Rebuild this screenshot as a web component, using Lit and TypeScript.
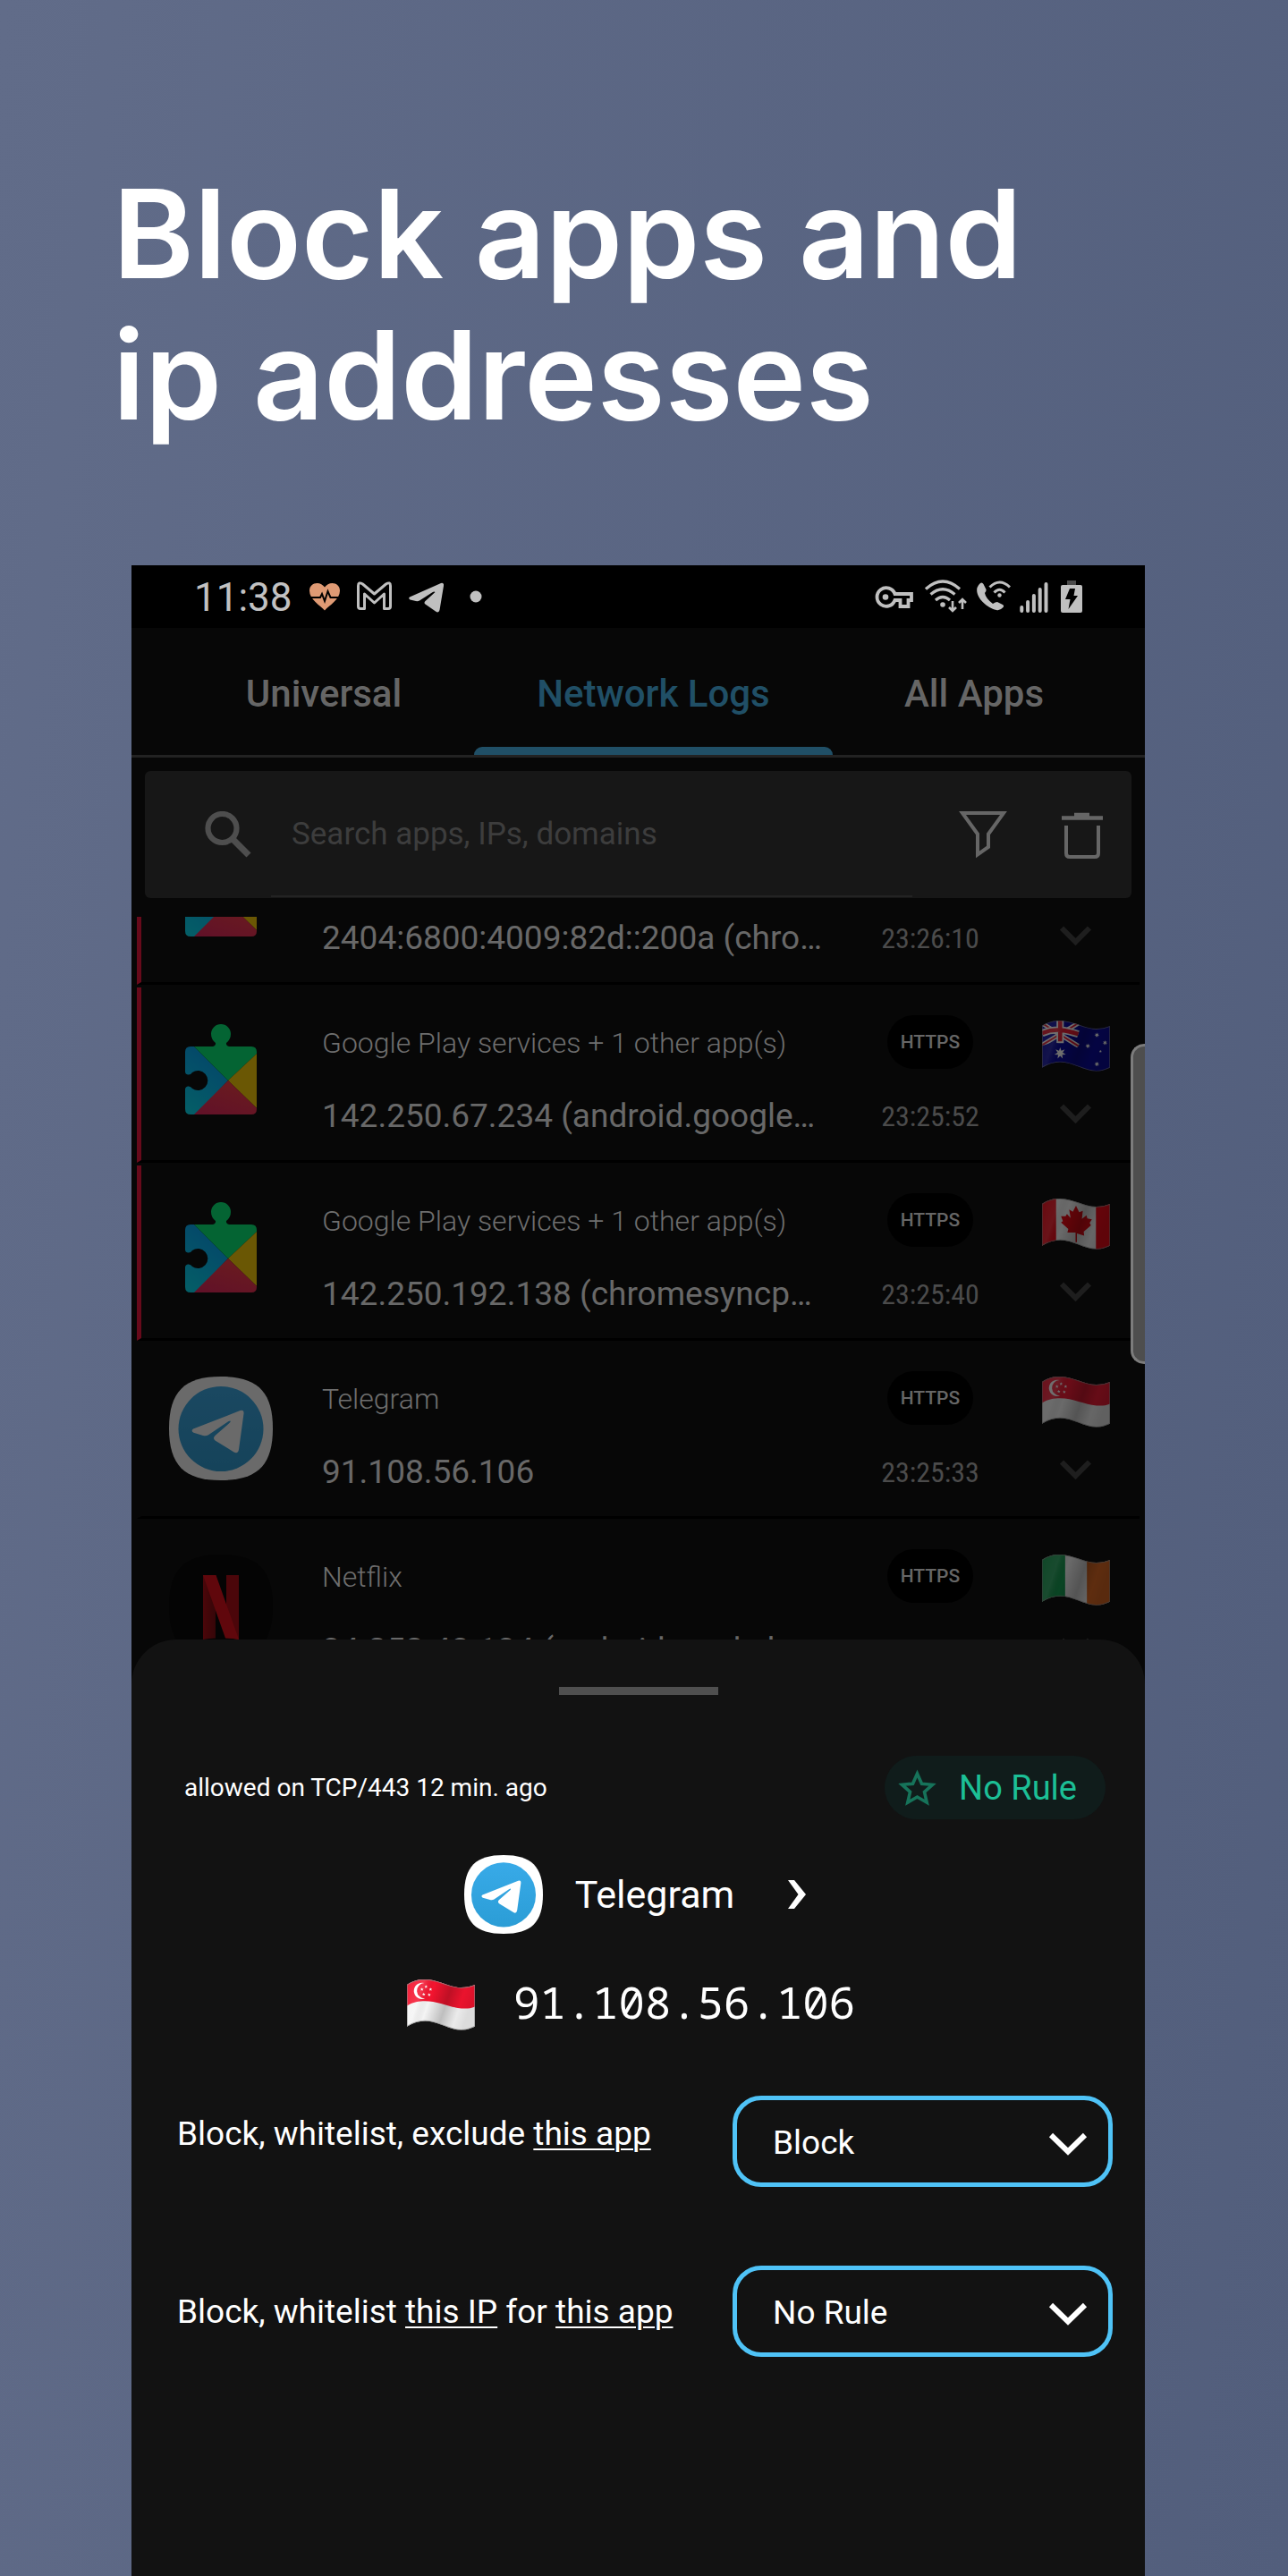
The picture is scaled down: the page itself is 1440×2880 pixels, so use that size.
import { LitElement, html, svg, css, nothing } from "lit";
import { customElement, property } from "lit/decorators.js";

type Country = "au" | "ca" | "sg" | "ie";
type AppKind = "play" | "telegram" | "netflix";

interface LogEntry {
  app?: string;
  kind: AppKind;
  address: string;
  time: string;
  country?: Country;
  blocked: boolean;
}

// The first entry is scrolled half out of view, so only its lower line is filled in.
const ENTRIES: LogEntry[] = [
  { kind: "play", address: "2404:6800:4009:82d::200a (chro…", time: "23:26:10", blocked: true },
  { app: "Google Play services + 1 other app(s)", kind: "play", address: "142.250.67.234 (android.google…", time: "23:25:52", country: "au", blocked: true },
  { app: "Google Play services + 1 other app(s)", kind: "play", address: "142.250.192.138 (chromesyncp…", time: "23:25:40", country: "ca", blocked: true },
  { app: "Telegram", kind: "telegram", address: "91.108.56.106", time: "23:25:33", country: "sg", blocked: false },
  { app: "Netflix", kind: "netflix", address: "34.252.43.134 (android.prod.cl…", time: "23:24:31", country: "ie", blocked: false },
];

const SQUIRCLE = "M58 0C99 0 116 17 116 58C116 99 99 116 58 116C17 116 0 99 0 58C0 17 17 0 58 0Z";
const PLANE =
  "M27 58.500L79.500 38Q84 36.500 83.500 41.500L78 81.500Q77 87 72.500 84.500L51.500 71.500Q48.500 69 51.500 66L68 51.500Q70 48.500 66.500 50L44 65.300Q41.500 66.800 38 66L27.500 62.800Q24 60.500 27 58.500Z";
const FLAG =
  "M0 6C7 1 13 0 20 0C34 0 47 9 60 9C66 9 70 8 75 6V52C70 54 66 56 60 56C47 56 34 46 20 46C13 46 7 48 0 52Z";

@customElement("app-icon")
export class AppIcon extends LitElement {
  @property() kind: AppKind = "telegram";

  static styles = css`
    :host { display: block; }
    svg { display: block; width: 100%; height: auto; }
  `;

  private telegram() {
    return svg`
      <defs><linearGradient id="sky" x1="0" y1="0" x2="0" y2="1">
        <stop offset="0" stop-color="#38aae8"/><stop offset="1" stop-color="#2b9dd6"/>
      </linearGradient></defs>
      <path d=${SQUIRCLE} fill="#fff"/>
      <circle cx="58" cy="58.500" r="47.500" fill="url(#sky)"/>
      <path d=${PLANE} fill="#fff"/>`;
  }

  private netflix() {
    return svg`
      <defs><linearGradient id="fold" x1="0" y1="0" x2="1" y2="0">
        <stop offset="0" stop-color="#b1060f"/><stop offset="1" stop-color="#7c050b"/>
      </linearGradient></defs>
      <path d=${SQUIRCLE} fill="#000"/>
      <path d="M38 23H52V93.500Q45 93.500 38 95Z" fill="url(#fold)"/>
      <path d="M64 23H78V95Q71 93.500 64 93.500Z" fill="#b1060f"/>
      <path d="M38 23H52.500L78 95Q71 93.500 63 93.500Z" fill="#e50914"/>`;
  }

  private play() {
    return svg`
      <defs>
        <clipPath id="piece"><path d="M24 29H49Q52.500 28 52 25Q47 21 47 15A11 11 0 0 1 69 15Q69 21 64 25Q63.500 28 67 29H92Q98 29 98 35V99Q98 105 92 105H24Q18 105 18 99V77Q18 74 21 73.500Q24 73 26 76A11 11 0 1 0 26 58Q24 61 21 60.500Q18 60 18 57V35Q18 29 24 29Z"/></clipPath>
        <linearGradient id="blue" x1="0" y1="1" x2="0.400" y2="0"><stop offset="0" stop-color="#00e3f5"/><stop offset="1" stop-color="#00a2ff"/></linearGradient>
        <linearGradient id="red" x1="0" y1="1" x2="0.600" y2="0"><stop offset="0" stop-color="#e6205c"/><stop offset="1" stop-color="#ff3a44"/></linearGradient>
      </defs>
      <g clip-path="url(#piece)">
        <path d="M18 20V105H30L66 67L28 29Z" fill="url(#blue)"/>
        <path d="M28 29L40 0H80L98 29V37L66 67Z" fill="#00f076"/>
        <path d="M98 37V98L66 67Z" fill="#ffd000"/>
        <path d="M28 105L66 67L98 98V105Z" fill="url(#red)"/>
      </g>`;
  }

  render() {
    const art = this.kind === "telegram" ? this.telegram() : this.kind === "netflix" ? this.netflix() : this.play();
    return html`<svg viewBox="0 0 116 116" aria-hidden="true">${art}</svg>`;
  }
}

@customElement("country-flag")
export class CountryFlag extends LitElement {
  @property() country: Country = "sg";

  static styles = css`
    :host { display: block; width: 76px; }
    svg { display: block; width: 100%; height: auto; }
  `;

  private star(x: number, y: number, r: number, points = 5) {
    const pts = Array.from({ length: points * 2 }, (_, i) => {
      const a = (Math.PI * i) / points - Math.PI / 2;
      const d = i % 2 ? r * 0.45 : r;
      return `${(x + d * Math.cos(a)).toFixed(2)},${(y + d * Math.sin(a)).toFixed(2)}`;
    }).join(" ");
    return svg`<polygon points=${pts} fill="#fff"/>`;
  }

  private art() {
    switch (this.country) {
      case "sg":
        return svg`
          <rect width="75" height="56" fill="#f4f4f4"/>
          <path d="M0 0H75V30C70 32 66 32.500 60 32C47 31 34 24 20 24C13 24 7 25 0 29Z" fill="#f4142f"/>
          <path d="M19 4A9 9 0 1 0 20 21A8.500 8.500 0 0 1 19 4Z" fill="#fff"/>
          ${this.star(21, 8, 1.9)}${this.star(26, 11, 1.9)}${this.star(24.500, 17, 1.9)}${this.star(18.500, 16.500, 1.9)}${this.star(16.500, 11, 1.9)}`;
      case "ca":
        return svg`
          <rect width="75" height="56" fill="#f4f4f4"/>
          <rect width="15.500" height="56" fill="#f00010"/><rect x="59.500" width="16" height="56" fill="#f00010"/>
          <path d="M37.500 8L41 15L45 13.500L44 22.500L49 18.500L50 22L55 23L52.500 27L54 29.500L46 36.500L46.500 41L38.500 38.500V48H37V37.500L28 37.500L29 33.500L21 26.500L23 25L21 19.500L26 19.500L27.500 17L31.500 21.500L30 12L34 14.500Z" fill="#e8000c"/>`;
      case "ie":
        return svg`
          <rect width="75" height="56" fill="#f4f4f4"/>
          <rect width="25.500" height="56" fill="#0f9a4c"/><rect x="49.500" width="26" height="56" fill="#e0661c"/>`;
      default:
        return svg`
          <rect width="75" height="56" fill="#00009c"/>
          <path d="M0 3L40 28M0 27L40 3" stroke="#fff" stroke-width="5"/>
          <path d="M0 3L40 28M0 27L40 3" stroke="#e8142c" stroke-width="1.800"/>
          <path d="M20 0V25M0 14C7 11 13 10 20 10.500S34 13 40 15" stroke="#fff" stroke-width="8" fill="none"/>
          <path d="M20 0V23M0 14C7 11 13 10 20 10.500S34 13 40 15" stroke="#e8142c" stroke-width="4.500" fill="none"/>
          <path d="M40.500 5V60H0V28L12 24L40.500 30Z" fill="#00009c"/>
          ${this.star(20, 36, 6.5, 7)}${this.star(60.500, 16, 2.8, 7)}${this.star(69.500, 24.500, 2.8, 7)}${this.star(50.500, 28, 2.8, 7)}${this.star(60.500, 48, 2.8, 7)}${this.star(64.500, 34, 1.6)}`;
    }
  }

  render() {
    return html`<svg viewBox="0 0 75 57" role="img" aria-label=${this.country}>
      <defs>
        <clipPath id="wave"><path d=${FLAG} /></clipPath>
        <linearGradient id="shade" x1="0" y1="0" x2="1" y2="0.250">
          <stop offset="0" stop-color="#fff" stop-opacity="0.050" />
          <stop offset="0.250" stop-color="#fff" stop-opacity="0.150" />
          <stop offset="0.400" stop-color="#000" stop-opacity="0" />
          <stop offset="0.650" stop-color="#000" stop-opacity="0.220" />
          <stop offset="0.850" stop-color="#000" stop-opacity="0.040" />
          <stop offset="1" stop-color="#000" stop-opacity="0.100" />
        </linearGradient>
      </defs>
      <g clip-path="url(#wave)">${this.art()}<rect width="75" height="57" fill="url(#shade)" />
        <path d=${FLAG} fill="none" stroke="#8a8a8a" stroke-opacity="0.700" stroke-width="1.500" />
      </g>
    </svg>`;
  }
}

@customElement("log-row")
export class LogRow extends LitElement {
  @property({ attribute: false }) entry!: LogEntry;

  static styles = css`
    :host { display: block; padding-bottom: 3px; }
    .row {
      box-sizing: border-box;
      height: 196px;
      border-left: 5px solid transparent;
      border-bottom: 3px solid #000;
      padding: 31px 33px 0 31px;
      display: grid;
      grid-template-columns: 171px minmax(0, 1fr) 250px 76px;
    }
    .row.blocked { border-left-color: #670a1b; }
    .icon { width: 116px; padding-top: 6px; opacity: 0.4; }
    .col { display: flex; flex-direction: column; gap: 22px; }
    .col.mid { align-items: center; }
    .line { height: 60px; line-height: 62px; white-space: nowrap; }
    .name { font-size: 32px; font-weight: 300; color: #6e6e6e; }
    .addr { font-size: 37px; color: #686868; }
    .pill {
      box-sizing: border-box;
      width: 96px;
      border-radius: 30px;
      background: #000;
      color: #666;
      font-size: 21px;
      font-weight: 500;
      line-height: 60px;
      text-align: center;
    }
    .time { font-family: "Roboto Condensed", Roboto, sans-serif; font-size: 32px; color: #4b4b4b; }
    .flag { box-sizing: border-box; height: 60px; padding-top: 6px; opacity: 0.42; }
    .more {
      height: 56px; width: 76px; padding: 0; border: 0; background: none;
      display: flex; align-items: center; justify-content: center;
    }
    .more svg { width: 36px; height: 22px; display: block; }
  `;

  render() {
    const e = this.entry;
    if (!e) return nothing;
    const gap = html`<span class="line"></span>`;
    return html`<div class="row ${e.blocked ? "blocked" : ""}">
      <app-icon class="icon" .kind=${e.kind}></app-icon>
      <div class="col">
        ${e.app ? html`<span class="line name">${e.app}</span>` : gap}
        <span class="line addr">${e.address}</span>
      </div>
      <div class="col mid">
        ${e.app ? html`<span class="line pill">HTTPS</span>` : gap}
        <time class="line time">${e.time}</time>
      </div>
      <div class="col">
        ${e.country ? html`<country-flag class="flag" .country=${e.country}></country-flag>` : gap}
        <button class="more" aria-label="Expand entry">
          <svg viewBox="0 0 36 22"><path d="M2 2.500L17.500 18L33 2.500" fill="none" stroke="#1e1e1e" stroke-width="6" /></svg>
        </button>
      </div>
    </div>`;
  }
}

@customElement("status-bar")
export class StatusBar extends LitElement {
  static styles = css`
    :host {
      display: flex; justify-content: space-between; align-items: center;
      height: 70px; padding: 0 70px 0 70px; background: #000;
      color: #c2c2c2; font-size: 44px; line-height: 70px;
    }
    .group { display: flex; align-items: center; gap: 19px; }
    .group.system { gap: 10px; }
    .clock { padding-top: 2px; }
    svg { display: block; height: 40px; }
  `;

  render() {
    return html`
      <div class="group">
        <span class="clock">11:38</span>
        <svg width="34" viewBox="0 0 34 40" aria-hidden="true">
          <path d="M17 35.500C12 30 0 23 0 13.500C0 8 4 5 8.500 5C12 5 15 7 17 9.500C19 7 22 5 25.500 5C30 5 34 8 34 13.500C34 23 22 30 17 35.500Z" fill="#df9a74" />
          <path d="M2 21H12L14 17L17 25L20.500 14L23.500 21H32" fill="none" stroke="#000" stroke-width="2" />
        </svg>
        <svg width="39" viewBox="0 0 39 40" aria-hidden="true">
          <path d="M1.500 8Q1.500 3 6.500 6L19.500 17L32.500 6Q37.500 3 37.500 8V31Q37.500 33.500 35 33.500H30.500V17L19.500 27L8.500 17V33.500H4Q1.500 33.500 1.500 31Z" fill="none" stroke="#c0c0c0" stroke-width="3" stroke-linejoin="round" />
        </svg>
        <svg width="39" viewBox="0 0 39 40" aria-hidden="true">
          <path d="M1 20.500L36 5Q39.500 4 39 8L34.500 35Q33.500 39 30 36.500L18.500 28.500Q16.500 27 18.500 25L29.500 15Q28.500 14 26 15.500L12 24.500Q10 25.500 8 25L1.500 23.500Q-1 22 1 20.500Z" fill="#c0c0c0" />
        </svg>
        <svg width="36" viewBox="0 0 36 40" aria-hidden="true"><circle cx="17" cy="20" r="6.500" fill="#c0c0c0" /></svg>
      </div>
      <div class="group system">
        <svg width="46" viewBox="0 0 46 40" aria-hidden="true" fill="none" stroke="#c0c0c0">
          <path d="M22.500 17H41V24H37.500V31H28.500V24H22.500A10.300 10.300 0 1 1 22.500 17Z" stroke-width="3.800" />
          <circle cx="12" cy="20.500" r="3.300" fill="#c0c0c0" stroke="none" />
        </svg>
        <svg width="48" viewBox="0 0 48 40" aria-hidden="true" fill="none" stroke="#c0c0c0" stroke-width="3.200">
          <path d="M1 11.500Q20 -5.500 39 11.500M6.500 17.500Q20 6 33.500 17.500M12 24Q20 17 28 24" />
          <circle cx="20" cy="29" r="2.800" fill="#c0c0c0" stroke="none" />
          <path d="M31 25V35M27 32L31 36L35 32M42 34V24M38 27L42 23L46 27" stroke-width="2.600" />
        </svg>
        <svg width="38" viewBox="0 0 38 40" aria-hidden="true" fill="none" stroke="#c0c0c0" stroke-width="3">
          <path d="M4 5Q6 3.500 7.500 6L10.500 12Q11 14 9 16Q10 22 18 28Q21 26 23 26L29 29Q31 30 29.500 32Q26 36 22 35C10 32 -2 20 0.500 10Q1.500 7 4 5Z" fill="#c0c0c0" stroke="none" />
          <path d="M14.500 9.500Q25.500 -1.500 37 9.500M19.500 15.500Q25.500 9 31.500 15.500" />
          <circle cx="25.500" cy="18.500" r="2.200" fill="#c0c0c0" stroke="none" />
        </svg>
        <svg width="32" viewBox="0 0 32 40" aria-hidden="true" stroke="#c0c0c0" stroke-width="4" stroke-linecap="round">
          <path d="M2.300 32V36M9.100 26V36M15.900 19V36M22.700 12V36M29.500 6V36" />
        </svg>
        <svg width="28" viewBox="0 0 28 40" aria-hidden="true">
          <rect x="11" y="2" width="10" height="7" fill="#4a4a4a" />
          <rect x="4" y="7" width="24" height="31" rx="2" fill="#c0c0c0" />
          <path d="M14 11H20L18.500 19H23L12.500 34L14.500 23H9Z" fill="#000" />
        </svg>
      </div>`;
  }
}

@customElement("rule-sheet")
export class RuleSheet extends LitElement {
  static styles = css`
    :host {
      display: block; background: #121212; border-radius: 50px 50px 0 0;
      padding: 53px 0 80px; color: #fff;
    }
    .grip { width: 178px; height: 9px; margin: 0 auto; background: #4f4f4f; }
    .summary {
      display: flex; justify-content: space-between; align-items: center;
      margin-top: 68px; padding: 0 44px 0 59px;
    }
    .note { font-size: 28px; }
    .chip {
      display: flex; align-items: center; gap: 25px; height: 71px; padding: 0 32px 0 15px;
      border: 0; border-radius: 36px; background: #101c1b; color: #1cbf96;
      font: inherit; font-size: 38px;
    }
    .chip svg { width: 43px; height: 42px; }
    .app {
      display: flex; align-items: center; justify-content: center; gap: 36px;
      margin-top: 40px; height: 88px; font-size: 43px;
    }
    .app app-icon { width: 88px; }
    .open { display: flex; padding: 0 0 0 24px; border: 0; background: none; }
    .open svg { width: 27px; height: 32px; display: block; }
    .host {
      display: flex; align-items: center; justify-content: center; gap: 43px;
      margin-top: 50px; height: 60px; padding-right: 16px;
    }
    .ip {
      padding-bottom: 8px;
      font-family: "Noto Sans Mono", "DejaVu Sans Mono", "Liberation Mono", monospace;
      font-size: 49px; line-height: 52px;
    }
    .rules { display: flex; flex-direction: column; gap: 88px; margin-top: 71px; padding: 0 36px 0 51px; }
    .rule { display: flex; justify-content: space-between; align-items: center; font-size: 37px; }
    .rule.raised label { padding-bottom: 18px; }
    u { text-decoration-thickness: 2px; text-underline-offset: 4px; }
    .picker { position: relative; }
    select {
      appearance: none; display: block; box-sizing: border-box; width: 425px; height: 102px;
      padding: 2px 90px 0 40px; border: 5px solid #4fc3f7; border-radius: 32px;
      background: transparent; color: #fff; font: inherit;
    }
    .caret { position: absolute; right: 28px; top: 40px; width: 44px; height: 28px; pointer-events: none; }
  `;

  private picker(id: string, value: string) {
    return html`<div class="picker">
      <select id=${id}><option>${value}</option></select>
      <svg class="caret" viewBox="0 0 44 28" aria-hidden="true">
        <path d="M3 4L22 22.500L41 4" fill="none" stroke="#fff" stroke-width="6" />
      </svg>
    </div>`;
  }

  render() {
    return html`
      <div class="grip"></div>
      <div class="summary">
        <span class="note">allowed on TCP/443 12 min. ago</span>
        <button class="chip">
          <svg viewBox="0 0 43 42" aria-hidden="true">
            <path d="M21.500 5L26.500 16.200L38.500 17.300L29.500 25.300L32.200 37.200L21.500 31L10.800 37.200L13.500 25.300L4.500 17.300L16.500 16.200Z" fill="none" stroke="#16735a" stroke-width="3.600" />
          </svg>
          <span>No Rule</span>
        </button>
      </div>
      <div class="app">
        <app-icon kind="telegram"></app-icon>
        <span>Telegram</span>
        <button class="open" aria-label="Open app details">
          <svg viewBox="0 0 27 32" aria-hidden="true"><path d="M0 0H7L20 16L7 32H0L11.500 16Z" fill="#fff" /></svg>
        </button>
      </div>
      <div class="host">
        <country-flag country="sg"></country-flag>
        <span class="ip">91.108.56.106</span>
      </div>
      <div class="rules">
        <div class="rule raised">
          <label for="app-rule">Block, whitelist, exclude <u>this app</u></label>
          ${this.picker("app-rule", "Block")}
        </div>
        <div class="rule">
          <label for="ip-rule">Block, whitelist <u>this IP</u> for <u>this app</u></label>
          ${this.picker("ip-rule", "No Rule")}
        </div>
      </div>`;
  }
}

@customElement("app-root")
export class AppRoot extends LitElement {
  static styles = css`
    :host {
      display: flex; flex-direction: column; box-sizing: border-box; min-height: 100vh;
      background: linear-gradient(97deg, #616c89, #525e7c);
      font-family: Roboto, sans-serif;
    }
    h1 {
      margin: 0; padding: 182px 120px 134px 126px; color: #fff;
      font-family: Inter, "Open Sans", sans-serif; font-size: 138px; line-height: 158px; font-weight: 600;
    }
    .phone {
      flex: 1; display: flex; flex-direction: column; position: relative;
      margin: 0 160px 0 147px; background: #070707;
    }
    .tabs { display: flex; height: 142px; padding: 0 33px 0 47px; border-bottom: 3px solid #222; }
    .tab {
      position: relative; flex: 336; padding: 5px 0 0; border: 0; background: none;
      color: #666; font: inherit; font-size: 42px; font-weight: 500; white-space: nowrap;
    }
    .tab.wide { flex-grow: 401; color: #204f66; }
    .tab.last { flex-grow: 316; }
    .tab.wide::after {
      content: ""; position: absolute; left: 0; right: 0; bottom: 0; height: 9px;
      border-radius: 9px 9px 0 0; background: #204f66;
    }
    .search {
      display: flex; align-items: center; height: 142px; margin: 15px 15px 0;
      padding: 0 32px 0 67px; box-sizing: border-box; background: #171717; border-radius: 6px;
    }
    .search svg { display: block; flex: none; }
    .search input {
      flex: 1; min-width: 0; align-self: stretch; margin: 0 52px 1px 22px; padding: 2px 0 0 23px;
      border: 0; border-bottom: 2px solid #232323; background: none; color: #999; font: inherit; font-size: 35px;
      appearance: none;
    }
    .search input::placeholder { color: #3d3d3d; opacity: 1; }
    .search button { padding: 0; border: 0; background: none; }
    .search button + button { margin-left: 61px; }
    .log { height: 858px; margin: 21px 6px 0; overflow: hidden; }
    .rows { margin-top: -120px; }
    .thumb {
      position: absolute; right: 0; top: 535px; box-sizing: border-box; width: 16px; height: 358px;
      background: #4e4e4e; border: 3px solid #7c7c7c; border-right: 0; border-radius: 15px 0 0 15px;
    }
    rule-sheet { flex: 1; position: relative; margin-top: -50px; }
  `;

  render() {
    return html`
      <h1>Block apps and<br />ip addresses</h1>
      <main class="phone">
        <status-bar></status-bar>
        <nav class="tabs">
          <button class="tab">Universal</button>
          <button class="tab wide">Network Logs</button>
          <button class="tab last">All Apps</button>
        </nav>
        <div class="search">
          <svg width="52" height="52" viewBox="0 0 52 52" aria-hidden="true" fill="none" stroke="#4e4e4e" stroke-width="6.200">
            <circle cx="19.500" cy="19" r="16" /><path d="M31 31L49 49" stroke-width="7" />
          </svg>
          <input type="search" aria-label="Search" placeholder="Search apps, IPs, domains" />
          <button aria-label="Filter">
            <svg width="54" height="54" viewBox="0 0 54 54" fill="none" stroke="#666" stroke-width="4">
              <path d="M4 3H50L33 26.500V41L21 49.500V26.500Z" />
            </svg>
          </button>
          <button aria-label="Clear logs">
            <svg width="46" height="54" viewBox="0 0 46 54" fill="none" stroke="#666" stroke-width="4">
              <path d="M0 8.500H46M14 5H31" stroke-width="4.500" /><path d="M5 17V48Q5 52 9 52H37Q41 52 41 48V17" />
            </svg>
          </button>
        </div>
        <section class="log">
          <div class="rows">${ENTRIES.map((e) => html`<log-row .entry=${e}></log-row>`)}</div>
        </section>
        <div class="thumb"></div>
        <rule-sheet></rule-sheet>
      </main>`;
  }
}
